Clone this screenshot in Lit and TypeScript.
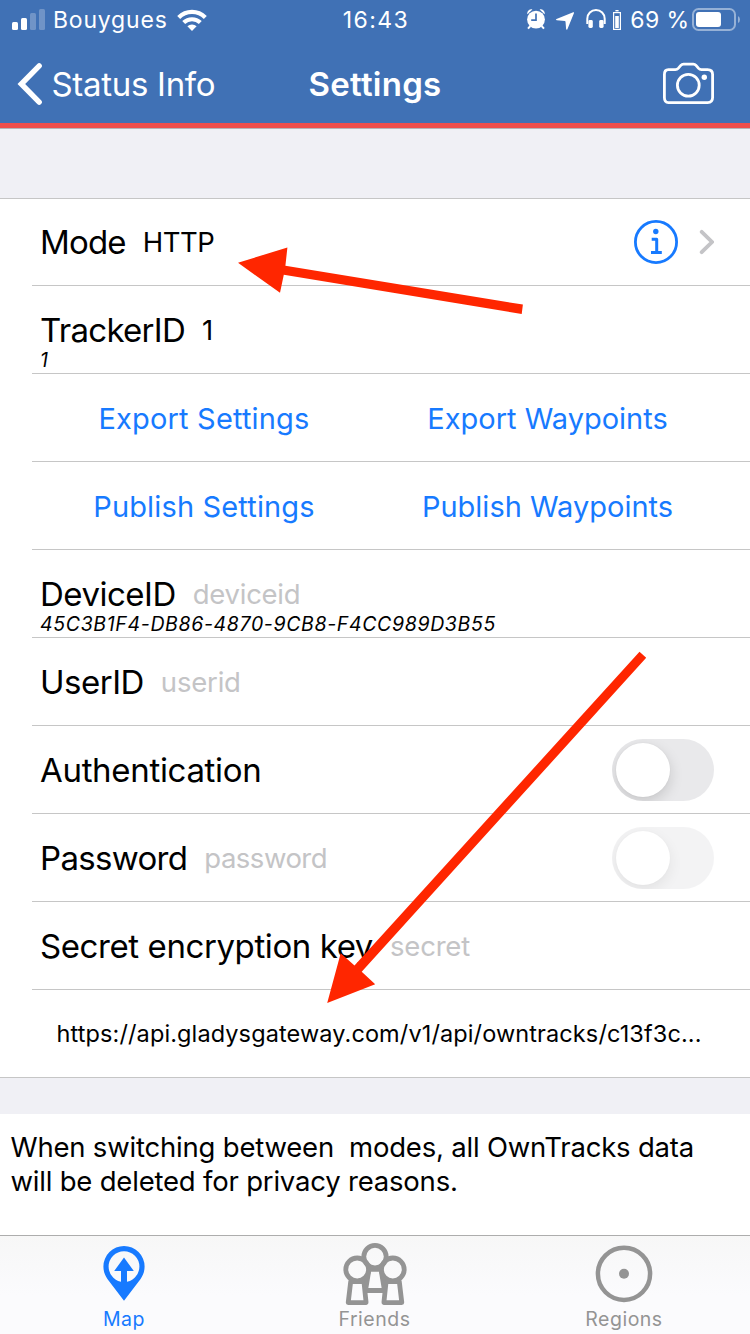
import { LitElement, html, css, nothing } from "lit";
import { customElement, property } from "lit/decorators.js";
import { styleMap } from "lit/directives/style-map.js";

interface Field {
  label: string;
  tracking: number;
  value?: string;
  valueTracking?: number;
  placeholder?: string;
  detail?: string;
  control?: "info" | "toggle" | "toggle-disabled";
}

const spacing = (px = 0) => styleMap({ letterSpacing: `${px}px` });

@customElement("status-bar")
class StatusBar extends LitElement {
  static styles = css`
    :host {
      display: grid;
      grid-template-columns: minmax(0, 1fr) auto minmax(0, 1fr);
      align-items: center;
      height: 40px;
      padding: 0 10px 0 12px;
      font-size: 23px;
      line-height: 28px;
      white-space: pre;
    }
    .side { display: flex; align-items: center; height: 40px; }
    .right { justify-content: flex-end; }
    .carrier { letter-spacing: 0.8px; margin: 0 9px 0 8px; }
    .time { letter-spacing: 1.4px; }
    .percent { letter-spacing: 0.4px; margin: 0 2.5px 0 8px; }
    svg { display: block; flex: none; }
  `;
  render() {
    return html`
      <div class="side">
        <svg width="33" height="40" viewBox="12 0 33 40" fill="#fff">
          <rect x="12" y="22" width="6" height="8" rx="1.5" />
          <rect x="21" y="18" width="6" height="12" rx="1.5" />
          <rect x="30" y="13" width="6" height="17" rx="1.5" opacity=".25" />
          <rect x="39" y="9" width="6" height="21" rx="1.5" opacity=".25" />
        </svg>
        <span class="carrier">Bouygues</span>
        <svg width="30" height="40" viewBox="176.5 0 30 40" fill="none" stroke="#fff" stroke-width="4.2">
          <path d="M178.2 17.4a19 19 0 0 1 26.6 0" />
          <path d="M183.2 22.6a12 12 0 0 1 16.6 0" />
          <path d="M191.5 31l-4.6-4.7a6.6 6.6 0 0 1 9.2 0z" fill="#fff" stroke="none" />
        </svg>
      </div>
      <span class="time">16:43</span>
      <div class="side right">
        <svg width="95" height="40" viewBox="527 0 95 40" fill="#fff">
          <circle cx="536" cy="19.6" r="8.9" />
          <path d="M527.4 14.2c-1-2.6 2.2-5.8 5-4.8zM544.6 14.2c1-2.6-2.2-5.8-5-4.8z" />
          <path d="M530.4 26l-2.4 2.6M541.6 26l2.4 2.6" stroke="#fff" stroke-width="2" />
          <path d="M536 13.5v6.7h-4.8" fill="none" stroke="#4071b5" stroke-width="1.7" />
          <path d="M573.2 12.2q1.200-.3.8.9l-6.600 16.200q-.8 1.200-1.300-.2l-.6-7.600-.6-.6-8.200-.6q-1.600-.5-.2-1.300z" />
          <path d="M587.300 24v-5.300a8.700 8.700 0 0 1 17.400 0V24" fill="none" stroke="#fff" stroke-width="2" />
          <rect x="588.400" y="20" width="4.400" height="8" rx="1.400" />
          <rect x="599.200" y="20" width="4.400" height="8" rx="1.400" />
          <rect x="613.600" y="12.600" width="6.800" height="16.800" fill="none" stroke="#fff" stroke-width="1.200" />
          <rect x="615.200" y="16" width="3.600" height="12" />
          <rect x="615.400" y="10" width="3.200" height="1.400" />
        </svg>
        <span class="percent">69 %</span>
        <svg width="48" height="40" viewBox="692 0 48 40">
          <rect x="693" y="9" width="42" height="21" rx="5.500" fill="none" stroke="#fff" stroke-opacity=".45" stroke-width="2" />
          <rect x="696" y="12" width="25" height="15" rx="3" fill="#fff" />
          <path d="M738 16v7q2-1 2-3.500t-2-3.500z" fill="#fff" opacity=".45" />
        </svg>
      </div>
    `;
  }
}

@customElement("nav-bar")
class NavBar extends LitElement {
  static styles = css`
    :host {
      display: grid;
      grid-template-columns: minmax(0, 1fr) auto minmax(0, 1fr);
      align-items: center;
      box-sizing: border-box;
      height: 83px;
      padding: 5px 16px 0;
      font-size: 33px;
      line-height: 40px;
    }
    .back { display: flex; align-items: center; gap: 6.500px; letter-spacing: -0.3px; white-space: nowrap; }
    .title { font-weight: 600; letter-spacing: 0.27px; }
    .action { display: flex; justify-content: flex-end; padding-right: 18px; }
    svg { display: block; }
  `;
  render() {
    return html`
      <div class="back">
        <svg width="29" height="46" viewBox="16 61 29 46" fill="none" stroke="#fff" stroke-width="5.4" stroke-linecap="round" stroke-linejoin="miter">
          <path d="M39.200 65.800L21.300 84L39.200 102.200" />
        </svg>
        <span>Status Info</span>
      </div>
      <span class="title">Settings</span>
      <div class="action">
        <svg width="54" height="44" viewBox="662 62 54 44" fill="none" stroke="#fff" stroke-width="2.8">
          <path d="M668.4 69.600h7q1.700 0 2.800-1.200l2.600-3q1.100-1.200 2.700-1.200h9.800q1.600 0 2.700 1.200l2.600 3q1.100 1.200 2.800 1.200h6.200q5 0 5 5v23q0 5-5 5h-39.200q-4 0-4-5v-23q0-5 4-5z" />
          <circle cx="688.300" cy="85.300" r="10.900" />
          <circle cx="704.300" cy="77.300" r="2.700" fill="#fff" stroke="none" />
        </svg>
      </div>
    `;
  }
}

@customElement("field-row")
class FieldRow extends LitElement {
  @property({ attribute: false }) field!: Field;
  static styles = css`
    :host {
      display: grid;
      grid-template-rows: 1fr 39px 1fr;
      height: 100%;
      padding: 0 36px 0 8px;
    }
    .main { grid-row: 2; display: flex; align-items: center; gap: 17px; line-height: 39px; white-space: pre; }
    .label { font-size: 33px; }
    .value { font-size: 27.5px; flex: 1; }
    .placeholder { color: #c4c4c6; }
    .detail { grid-row: 3; font-size: 19.5px; font-style: italic; line-height: 20px; letter-spacing: 0.65px; }
    .track { width: 102px; height: 62px; margin: -12px 0; flex: none; border-radius: 31px; background: #e9e9eb; overflow: hidden; }
    .knob { width: 54px; height: 54px; margin: 4px; border-radius: 50%; background: #fff; box-shadow: 0 5px 14px rgba(0, 0, 0, 0.15), 0 0 2px rgba(0, 0, 0, 0.05); }
    .disabled { opacity: 0.5; }
    svg { display: block; margin: -4px 0; }
  `;
  private control() {
    const c = this.field.control;
    if (!c) return nothing;
    if (c === "info")
      return html`<svg width="81" height="46" viewBox="633 219 81 46" fill="none">
        <circle cx="656" cy="242" r="20.600" stroke="#177aff" stroke-width="2.800" />
        <circle cx="655.800" cy="231.500" r="2.700" fill="#177aff" />
        <path d="M651.700 239.300h5v12.800M651 252.500h10.800" stroke="#177aff" stroke-width="3" stroke-linejoin="round" />
        <path d="M701.700 231.800L712 242L701.700 252.200" stroke="#c4c4c7" stroke-width="3.800" stroke-linecap="round" />
      </svg>`;
    return html`<div class="track ${c === "toggle-disabled" ? "disabled" : ""}"><div class="knob"></div></div>`;
  }
  render() {
    const f = this.field;
    return html`
      <div class="main">
        <span class="label" style=${spacing(f.tracking)}>${f.label}</span>
        <span class="value ${f.placeholder ? "placeholder" : ""}" style=${spacing(f.valueTracking)}>${f.value ?? f.placeholder ?? ""}</span>
        ${this.control()}
      </div>
      ${f.detail ? html`<div class="detail">${f.detail}</div>` : nothing}
    `;
  }
}

@customElement("tab-bar")
class TabBar extends LitElement {
  static styles = css`
    :host {
      display: grid;
      grid-template-columns: repeat(3, 250px);
      height: 98px;
      border-top: 1px solid #adadad;
      background: linear-gradient(#f7f7f7, #fbfbfd 60%);
    }
    .tab { display: flex; flex-direction: column; align-items: center; padding: 4px 2px 0 0; color: #949494; font-size: 19.5px; line-height: 22px; letter-spacing: 0.5px; }
    .middle { padding-right: 0; }
    .middle span { margin-right: 1px; }
    .active { color: #177aff; }
    svg { display: block; }
  `;
  render() {
    return html`
      <div class="tab active">
        <svg width="68" height="68" viewBox="90 1240 68 68" fill="currentColor">
          <path fill-rule="evenodd" d="M124 1246a20.600 20.600 0 0 1 20.600 20.600c0 5-1.600 8.800-4.200 12.600L124 1300.700L107.600 1279.200c-2.600-3.800-4.200-7.600-4.200-12.600A20.600 20.600 0 0 1 124 1246zM124 1251.200a15.400 15.400 0 1 0 0 30.800a15.400 15.400 0 0 0 0-30.800z" />
          <path d="M124 1257.500L133.800 1271H127v12h-6v-12h-6.800z" />
        </svg>
        <span>Map</span>
      </div>
      <div class="tab middle">
        <svg width="68" height="68" viewBox="341 1240 68 68" fill="none" stroke="currentColor" stroke-width="4.800" stroke-linejoin="round">
          <circle cx="375" cy="1256.600" r="11.200" />
          <circle cx="357.200" cy="1269.400" r="11.400" />
          <circle cx="392.800" cy="1269.400" r="11.400" />
          <path d="M350.700 1281.500h13.200l2.200 21.100H348.200z" />
          <path d="M399.300 1281.500h-13.200l-2.200 21.100H401.800z" />
          <path d="M369 1269.300h12l3.500 21.200h-19z" />
        </svg>
        <span>Friends</span>
      </div>
      <div class="tab">
        <svg width="68" height="68" viewBox="590 1240 68 68" fill="none" stroke="currentColor">
          <circle cx="624" cy="1273.800" r="26.100" stroke-width="4.500" />
          <circle cx="624" cy="1273.800" r="5" fill="currentColor" stroke="none" />
        </svg>
        <span>Regions</span>
      </div>
    `;
  }
}

@customElement("app-root")
class AppRoot extends LitElement {
  static styles = css`
    :host {
      display: block;
      position: relative;
      width: 750px;
      height: 1334px;
      overflow: hidden;
      background: #f0f0f5;
      color: #000;
      font-family: Inter, "Liberation Sans", sans-serif;
    }
    header { background: #4071b5; color: #fff; border-bottom: 5px solid #ee4e4c; }
    .spacer { box-sizing: border-box; height: 70px; border-top: 1px solid #b5b5b8; }
    .list { background: #fff; border-top: 1px solid #c6c6c6; border-bottom: 1px solid #c6c6c6; }
    .row { box-sizing: border-box; height: 88px; margin-left: 32px; padding-top: 1px; border-bottom: 1px solid #c6c6c6; }
    .row:first-child { height: 87px; padding-top: 0; }
    .row:last-child { border-bottom: none; height: 87px; }
    .buttons { display: grid; grid-template-columns: 344px 343px; align-items: center; justify-items: center; padding-top: 3px; color: #177aff; font-size: 29px; line-height: 36px; white-space: nowrap; }
    .url { display: flex; align-items: center; padding: 0 0 1px 24.500px; font-size: 23.5px; letter-spacing: 0.11px; white-space: nowrap; }
    .note { box-sizing: border-box; height: 121px; margin-top: 36px; padding: 16px 0 0 10.500px; background: #fff; font-size: 27.5px; line-height: 34px; letter-spacing: -0.2px; white-space: pre; }
    .arrows { position: absolute; left: 0; top: 0; pointer-events: none; }
  `;

  private top: Field[] = [
    { label: "Mode", tracking: -0.85, value: "HTTP", valueTracking: -0.45, control: "info" },
    { label: "TrackerID", tracking: -0.71, value: "1", detail: "1" },
  ];
  private actions = [
    [["Export Settings", 0.18], ["Export Waypoints", 0]],
    [["Publish Settings", 0.15], ["Publish Waypoints", 0]],
  ] as [string, number][][];
  private bottom: Field[] = [
    { label: "DeviceID", tracking: -0.49, placeholder: "deviceid", valueTracking: -0.28, detail: "45C3B1F4-DB86-4870-9CB8-F4CC989D3B55" },
    { label: "UserID", tracking: -0.5, placeholder: "userid", valueTracking: -0.2 },
    { label: "Authentication", tracking: -0.32, control: "toggle" },
    { label: "Password", tracking: -0.68, placeholder: "password", valueTracking: -0.5 },
    { label: "Secret encryption key", tracking: -0.41, placeholder: "secret", valueTracking: -0.2 },
  ].map((f) => (f.label === "Password" ? { ...f, control: "toggle-disabled" } : f)) as Field[];

  render() {
    const row = (f: Field) => html`<div class="row"><field-row .field=${f}></field-row></div>`;
    return html`
      <header>
        <status-bar></status-bar>
        <nav-bar></nav-bar>
      </header>
      <div class="spacer"></div>
      <div class="list">
        ${this.top.map(row)}
        ${this.actions.map(
          (pair) => html`<div class="row buttons">${pair.map(([t, s]) => html`<span style=${spacing(s)}>${t}</span>`)}</div>`
        )}
        ${this.bottom.map(row)}
        <div class="row url">https://api.gladysgateway.com/v1/api/owntracks/c13f3c...</div>
      </div>
      <div class="note">When switching between  modes, all OwnTracks data
will be deleted for privacy reasons.</div>
      <tab-bar></tab-bar>
      <svg class="arrows" width="750" height="1334" viewBox="0 0 750 1334" fill="#ff2600">
        <path d="M238 262.800L287.400 247.400L285.400 265.800L522.900 304.600L521.700 314L283.800 274.800L280 292.800z" />
        <path d="M327.200 1003L340.700 953.200L354.500 965.500L639.500 651.700L646.200 657.800L361.700 971.800L375.200 984.300z" />
      </svg>
    `;
  }
}
